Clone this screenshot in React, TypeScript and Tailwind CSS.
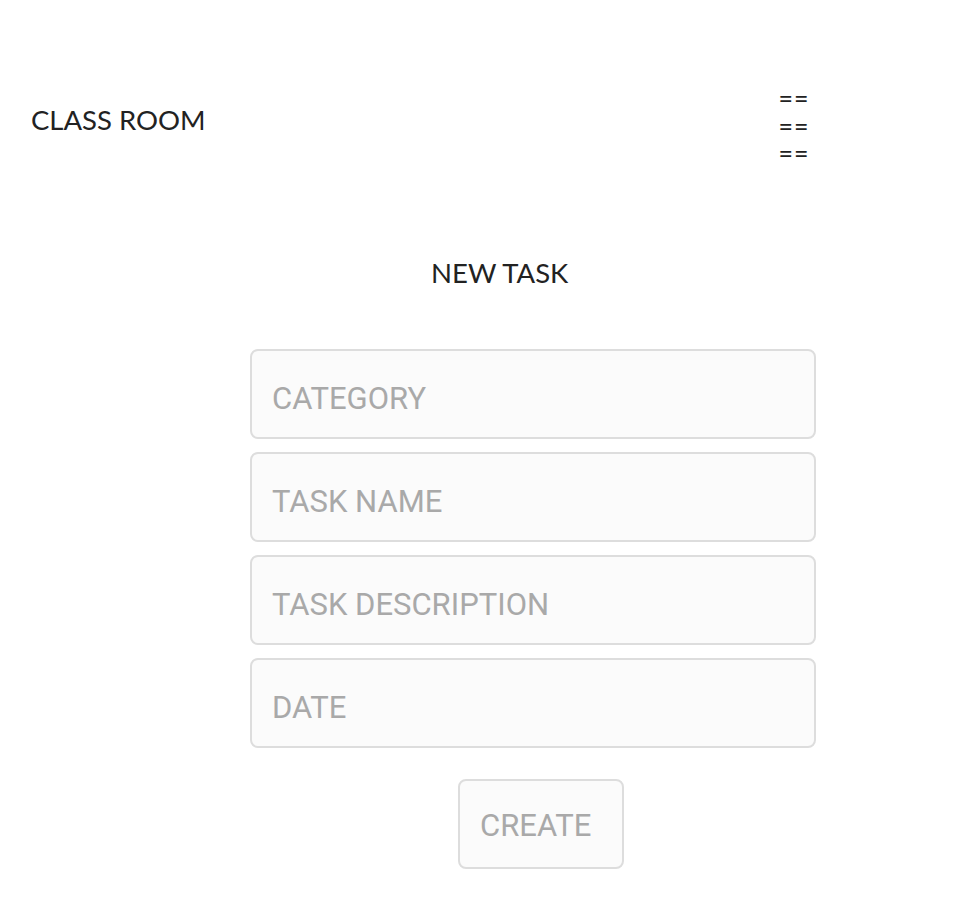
export default function App() {
  const fields = ["CATEGORY", "TASK NAME", "TASK DESCRIPTION", "DATE"];

  return (
    <div className="min-h-[918px] bg-white font-['Lato',sans-serif] text-[#222]">
      {/* Header */}
      <div className="flex items-start pt-[85px]">
        <div className="ml-[31px] mt-[18px] text-[27.5px] leading-[34px]">CLASS ROOM</div>
        <div className="ml-[573px] flex flex-col text-[25px] leading-[27.5px] tracking-[1px]">
          <span>==</span>
          <span>==</span>
          <span>==</span>
        </div>
      </div>

      {/* Title */}
      <div className="mt-[88px] pl-[431px] text-[27.5px] leading-[34px]">NEW TASK</div>

      {/* Form */}
      <form className="mt-[59px] ml-[250px] flex w-[566px] flex-col gap-[13px]">
        {fields.map(f => (
          <input
            key={f}
            type="text"
            placeholder={f}
            className="h-[90px] w-full rounded-[8px] border-2 border-[#dddddd] bg-[#fbfbfb] px-[20px] pt-[9px] font-['Roboto',sans-serif] text-[31px] text-[#333] outline-none placeholder:text-[#a9a9a9]"
          />
        ))}
        <button
          type="button"
          className="mt-[18px] ml-[208px] h-[90px] w-[166px] rounded-[8px] border-2 border-[#dddddd] bg-[#fbfbfb] pl-[20px] pt-[6px] text-left font-['Roboto',sans-serif] text-[31px] text-[#a9a9a9]"
        >
          CREATE
        </button>
      </form>
    </div>
  );
}
